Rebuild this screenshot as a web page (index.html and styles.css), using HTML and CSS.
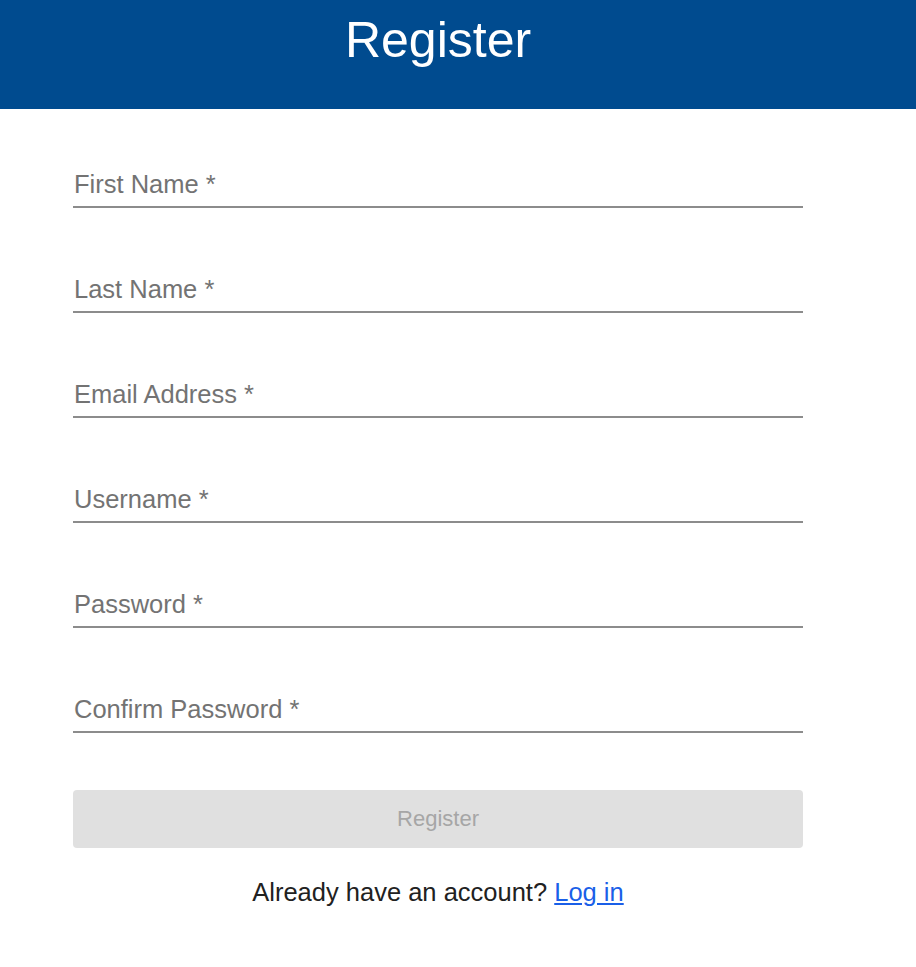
FILE: index.html
```html
<!DOCTYPE html>
<html>
<head>
<meta charset="utf-8">
<title>Register</title>
<link rel="stylesheet" href="styles.css">
</head>
<body>
<header class="topbar">
  <div class="topbar-inner">
    <h1 class="title">Register</h1>
  </div>
</header>
<main class="form-wrap">
  <form class="form">
    <div class="field"><span class="label">First Name *</span></div>
    <div class="field"><span class="label">Last Name *</span></div>
    <div class="field"><span class="label">Email Address *</span></div>
    <div class="field"><span class="label">Username *</span></div>
    <div class="field"><span class="label">Password *</span></div>
    <div class="field"><span class="label">Confirm Password *</span></div>
    <button type="button" class="submit" disabled>Register</button>
    <p class="login">Already have an account? <a href="#" class="login-link">Log in</a></p>
  </form>
</main>
</body>
</html>
```

FILE: styles.css
```css
* { box-sizing: border-box; }
html, body { margin: 0; padding: 0; background: #ffffff; }
body { font-family: "Liberation Sans", Arial, sans-serif; }

.topbar {
  height: 109px;
  background: #004b8f;
}
.topbar-inner {
  width: 730px;
  margin-left: 73px;
  padding-top: 11px;
}
.title {
  margin: 0;
  font-size: 50px;
  line-height: 58px;
  font-weight: normal;
  color: #ffffff;
  text-align: center;
}

.form-wrap {
  width: 730px;
  margin-left: 73px;
  padding-top: 58px;
}
.form {
  display: flex;
  flex-direction: column;
  gap: 64px;
}
.field {
  height: 41px;
  padding-top: 3px;
  padding-bottom: 8px;
  border-bottom: 2px solid #8c8c8c;
}
.label {
  display: block;
  padding-left: 1px;
  font-size: 25.5px;
  line-height: 28px;
  color: #737373;
}
.submit {
  margin-top: -7px;
  height: 58px;
  width: 100%;
  border: none;
  border-radius: 4px;
  background: #e0e0e0;
  color: #a6a6a6;
  font-family: "Liberation Sans", Arial, sans-serif;
  font-size: 22px;
}
.login {
  margin: -34px 0 0;
  text-align: center;
  font-size: 25.5px;
  line-height: 28px;
  color: #212121;
}
.login-link {
  color: #1a5fe8;
  text-decoration: underline;
}
```
